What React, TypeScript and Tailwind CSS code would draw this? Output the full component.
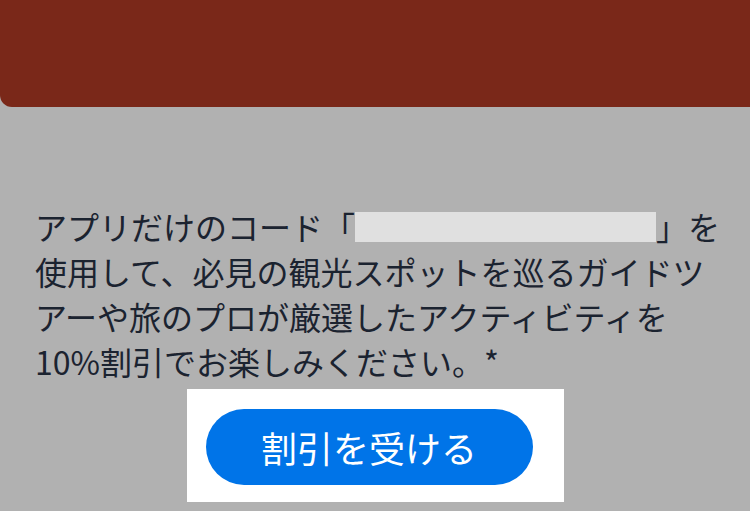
export default function App() {
  const lines = [
    null,
    '使用して、必見の観光スポットを巡るガイドツ',
    'アーや旅のプロが厳選したアクティビティを',
    '10%割引でお楽しみください。*',
  ];

  return (
    <div
      className="w-[750px] h-[511px] overflow-hidden bg-[#b1b1b1] flex flex-col"
      style={{ fontFamily: '"Noto Sans CJK JP", "Noto Sans", sans-serif' }}
    >
      {/* Banner */}
      <div className="h-[107px] shrink-0 bg-[#7a2819] rounded-bl-[12px]" />

      {/* Body copy */}
      <div className="mt-[97px] pl-[35px] text-[32px] leading-[45px] text-[#1b2330] whitespace-nowrap">
        <div className="flex items-center">
          <span>アプリだけのコード「</span>
          <span className="inline-block w-[301px] h-[30px] bg-[#e0e0e0]" />
          <span>」を</span>
        </div>
        {lines.slice(1).map((line) => (
          <div key={line}>{line}</div>
        ))}
      </div>

      {/* CTA */}
      <div className="mt-[5px] flex justify-center">
        <div className="w-[377px] h-[113px] bg-white pl-[19px] pr-[31px] pt-[20px] pb-[17px]">
          <button className="w-full h-full rounded-full bg-[#0074e8] text-white text-[36px] leading-none flex items-center justify-center">
            割引を受ける
          </button>
        </div>
      </div>
    </div>
  );
}
